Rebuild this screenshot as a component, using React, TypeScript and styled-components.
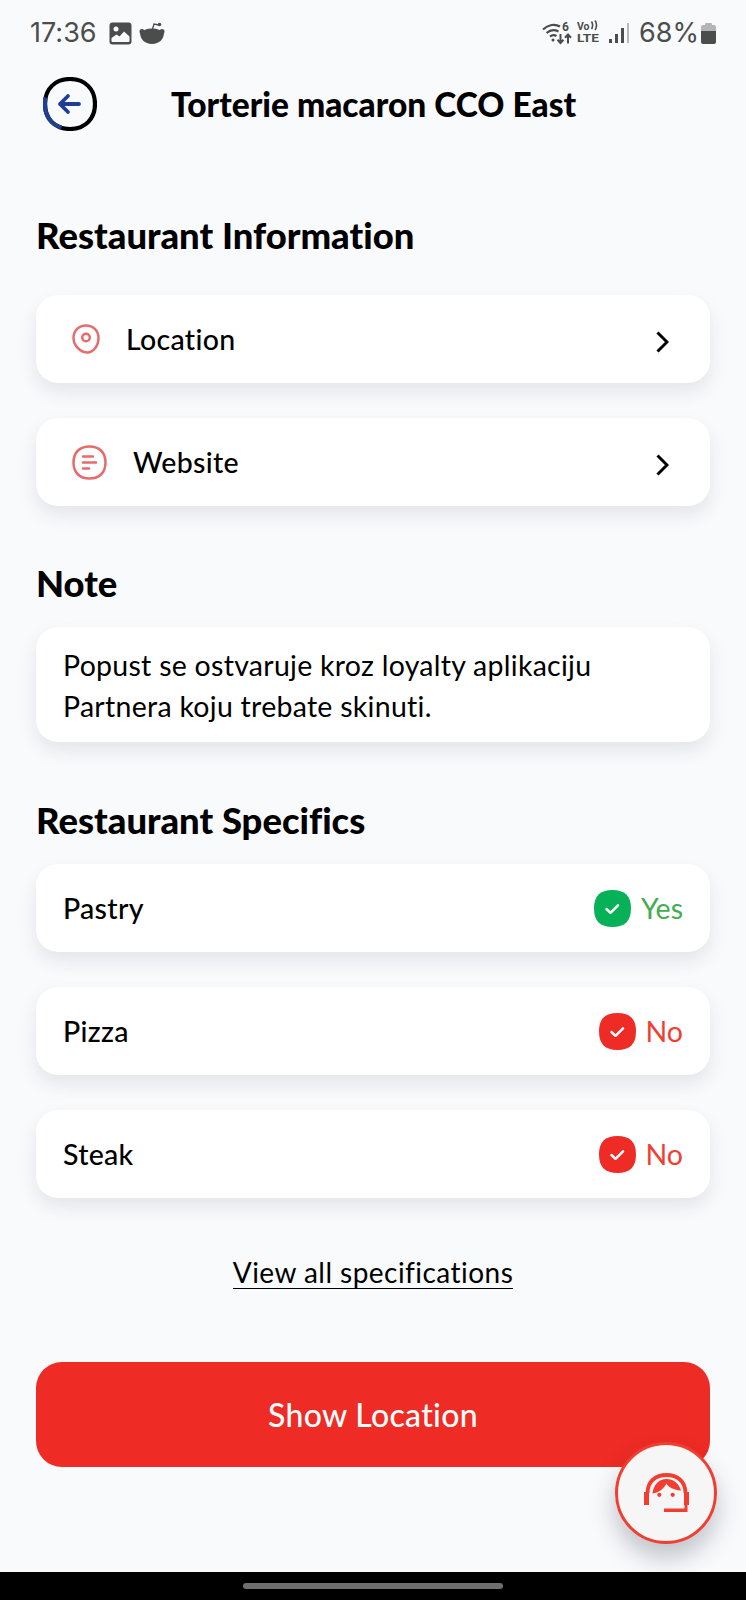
import React from 'react';
import styled, { createGlobalStyle } from 'styled-components';

const GlobalStyle = createGlobalStyle`
    html, body {
        margin: 0;
        padding: 0;
        background: #f9fafc;
    }
    * {
        box-sizing: border-box;
    }
`;

const Screen = styled.div`
    position: relative;
    width: 746px;
    height: 1600px;
    overflow: hidden;
    background: #f9fafc;
    font-family: Lato, "Liberation Sans", sans-serif;
    font-variant-ligatures: none;
    color: #000;
    display: flex;
    flex-direction: column;
`;

const StatusBar = styled.div`
    height: 66px;
    padding: 0 30px;
    display: flex;
    align-items: center;
    justify-content: space-between;
    color: #4b4d4d;
`;

const StatusGroup = styled.div<{ $gap: number }>`
    display: flex;
    align-items: center;
    gap: ${p => p.$gap}px;
`;

const StatusText = styled.span`
    font-family: Inter, Roboto, sans-serif;
    font-size: 27px;
    line-height: 32px;
    margin-right: 5px;
`;

const Battery = styled(StatusText)`
    margin: 0 -3px 0 4px;
`;

const Header = styled.header`
    height: 76px;
    padding-left: 43px;
    display: flex;
    align-items: center;
`;

const BackButton = styled.div`
    width: 54px;
    height: 54px;
`;

const Title = styled.h1`
    margin: 0 0 0 74px;
    font-size: 33.5px;
    line-height: 40px;
    font-weight: 900;
`;

const Content = styled.main`
    padding: 0 36px;
    display: flex;
    flex-direction: column;
`;

const SectionTitle = styled.h2<{ $top: number; $bottom: number }>`
    margin: ${p => p.$top}px 0 ${p => p.$bottom}px;
    font-size: 36.4px;
    line-height: 42px;
    font-weight: 900;
`;

const Card = styled.div`
    height: 88px;
    padding: 0 41px 0 36px;
    background: #fff;
    border-radius: 22px;
    box-shadow: 0 9px 18px rgba(40, 50, 70, 0.1);
    display: flex;
    align-items: center;
    justify-content: space-between;
`;

const CardStack = styled.div`
    display: flex;
    flex-direction: column;
    gap: 35px;
`;

const CardLabel = styled.div`
    display: flex;
    align-items: center;
    font-size: 28.5px;
    font-weight: 500;
    letter-spacing: 0.3px;
`;

const LinkText = styled.span<{ $gap: number }>`
    margin-left: ${p => p.$gap}px;
`;

const Chevron = styled.span`
    display: flex;
    margin-top: 6px;
`;

const SpecCard = styled(Card)`
    padding: 0 27px;
`;

const NoteCard = styled(Card)`
    height: 115px;
    padding: 18px 27px 0;
    font-size: 28.5px;
    line-height: 40.5px;
    letter-spacing: 0.27px;
    display: block;
`;

const Status = styled.div<{ $color: string }>`
    display: flex;
    align-items: center;
    gap: 10px;
    color: ${p => p.$color};
    font-size: 28.5px;
`;

const ViewAll = styled.a`
    align-self: center;
    margin-top: 58px;
    font-size: 28px;
    line-height: 32px;
    letter-spacing: 0.46px;
    color: #000;
    border-bottom: 1.5px solid #000;
`;

const PrimaryButton = styled.button`
    margin-top: 73px;
    height: 105px;
    border: none;
    border-radius: 26px;
    background: #ef2b25;
    color: #fff;
    font-family: inherit;
    font-variant-ligatures: none;
    font-size: 32px;
    font-weight: 500;
    letter-spacing: 0.3px;
`;

const SupportFab = styled.div`
    position: absolute;
    left: 615px;
    top: 1442px;
    width: 102px;
    height: 102px;
    border-radius: 50%;
    background: #f6f6f7;
    border: 3.5px solid #f23d31;
    box-shadow: 0 14px 24px rgba(40, 50, 70, 0.28);
    display: flex;
    align-items: center;
    justify-content: center;
`;

const NavBar = styled.div`
    position: absolute;
    left: 0;
    right: 0;
    bottom: 0;
    height: 28px;
    background: #000;
    display: flex;
    align-items: center;
    justify-content: center;
`;

const NavHandle = styled.div`
    width: 260px;
    height: 6px;
    border-radius: 3px;
    background: #6f6f6f;
`;

const SignalBars = styled.span`
    display: flex;
    margin-left: 3px;
`;

const GalleryIcon = () => (
    <svg width="23" height="23" viewBox="0 0 23 23">
        <rect width="22" height="22" x="0.5" y="0.5" rx="3" fill="#4b4d4d" />
        <circle cx="7" cy="7" r="2.5" fill="#f9fafc" />
        <path d="M2.5 19v-3l5-3.5 3 2 4.500-5 5.500 5V19a1 1 0 0 1-1 1H3.500a1 1 0 0 1-1-1z" fill="#f9fafc" />
    </svg>
);

const RedditIcon = () => (
    <svg width="26" height="23" viewBox="0 0 26 23">
        <path d="M1 10.500h24c0 6.500-4.500 11.500-12 11.500S1 17 1 10.500z" fill="#4b4d4d" />
        <ellipse cx="13" cy="10.500" rx="10" ry="4" fill="#4b4d4d" />
        <circle cx="3" cy="9.500" r="2.500" fill="#4b4d4d" />
        <circle cx="23" cy="9.500" r="2.500" fill="#4b4d4d" />
        <path d="M13.500 7l1.500-5 5 1" fill="none" stroke="#4b4d4d" strokeWidth="1.300" />
        <circle cx="20.500" cy="2.500" r="1.800" fill="#4b4d4d" />
    </svg>
);

const WifiIcon = () => (
    <svg width="30" height="24" viewBox="0 0 30 24" fill="none" stroke="#4b4d4d">
        <path d="M1 8.500c5-5 12-6 17-3" strokeWidth="2.200" />
        <path d="M4.500 12c3.500-3 8-3.500 12-1.500" strokeWidth="2.200" />
        <path d="M8 15.500c2-1.500 4.500-1.700 6.500-.5" strokeWidth="2.200" />
        <circle cx="11" cy="19" r="1.500" fill="#4b4d4d" stroke="none" />
        <path d="M18.500 13v9m-3-3.200l3 3.200 3-3.200M26 22.500v-9m-3 3.200l3-3.200 3 3.200" strokeWidth="2" />
        <text x="20" y="10" fontSize="12" fontWeight="700" fontFamily="Roboto" fill="#4b4d4d" stroke="none">6</text>
    </svg>
);

const VolteIcon = () => (
    <svg width="24" height="26" viewBox="0 -1 24 26" fill="#4b4d4d">
        <text x="0" y="8.500" fontSize="10" fontWeight="700" fontFamily="Roboto" textLength="12.500" lengthAdjust="spacingAndGlyphs">Vo</text>
        <path d="M14.500 .5c1.500 2 1.500 5.500 0 7.500M18 -.5c2 2.500 2 7 0 9.500" fill="none" stroke="#4b4d4d" strokeWidth="1.600" />
        <text x="0" y="21" fontSize="11" fontWeight="700" fontFamily="Roboto" textLength="22" lengthAdjust="spacingAndGlyphs">LTE</text>
    </svg>
);

const SignalIcon = () => (
    <svg width="21" height="22" viewBox="0 0 21 22">
        <rect x="0" y="17" width="3" height="4" fill="#4b4d4d" />
        <rect x="6" y="12" width="3" height="9" fill="#4b4d4d" />
        <rect x="12" y="6" width="3" height="15" fill="#4b4d4d" />
        <rect x="18" y="1" width="2" height="20" fill="#b9b9b9" />
    </svg>
);

const BatteryIcon = () => (
    <svg width="15" height="21" viewBox="0 0 15 21">
        <path d="M5 0h5a1 1 0 0 1 1 1v1h2a2 2 0 0 1 2 2v4H0V4a2 2 0 0 1 2-2h2V1a1 1 0 0 1 1-1z" fill="#b5b5b5" />
        <path d="M0 8h15v11a2 2 0 0 1-2 2H2a2 2 0 0 1-2-2z" fill="#4b4d4d" />
    </svg>
);

const BackIcon = () => (
    <svg width="54" height="54" viewBox="0 0 54 54" fill="none">
        <path
            d="M27 2C42 2 52 12 52 27S42 52 27 52 2 42 2 27 12 2 27 2z"
            stroke="#000"
            strokeWidth="4.200"
        />
        <path
            d="M18.500 50.500C8 47.500 2 39 2 27c0-2.500.2-4.500.6-6.500"
            stroke="#1f3f94"
            strokeWidth="4.200"
        />
        <path
            d="M36 27H17m8-8l-8 8 8 8"
            stroke="#1f3f94"
            strokeWidth="3.800"
            strokeLinecap="round"
            strokeLinejoin="round"
        />
    </svg>
);

const PinIcon = () => (
    <svg width="28" height="30" viewBox="0 0 28 30" fill="none" stroke="#e96a6b" strokeWidth="2.500">
        <path d="M14 1.500c7 0 12.500 5 12.500 12.500 0 8-5.500 14.500-11 14.500C9 28.500 1.500 22 1.500 14 1.500 6.500 7 1.500 14 1.500z" />
        <circle cx="14" cy="13.500" r="3.800" />
    </svg>
);

const NoteIcon = () => (
    <svg width="35" height="35" viewBox="0 0 35 35" fill="none" stroke="#e96a6b" strokeWidth="2.500" strokeLinecap="round">
        <path d="M17.500 1.500c10 0 16 6 16 16s-6 16-16 16-16-6-16-16 6-16 16-16z" />
        <path d="M11 11.500h10M11 17.500h13M11 23.500h6" />
    </svg>
);

const ChevronIcon = () => (
    <svg width="13" height="22" viewBox="0 0 13 22" fill="none">
        <path d="M1.500 1.500L11 11l-9.500 9.500" stroke="#000" strokeWidth="3" />
    </svg>
);

const BadgeIcon = ({ color }: { color: string }) => (
    <svg width="37" height="37" viewBox="0 0 37 37">
        <path d="M18.500 0C31 0 37 6 37 18.500S31 37 18.500 37 0 31 0 18.500 6 0 18.500 0z" fill={color} />
        <path d="M12.500 19l4 3.800 7.500-7.500" fill="none" stroke="#fff" strokeWidth="2.500" strokeLinecap="round" strokeLinejoin="round" />
    </svg>
);

const SupportIcon = () => (
    <svg width="45" height="40" viewBox="0 0 45 40" fill="#f23d31">
        <path d="M0 19h5v13H0zM40 19h5v13h-5z" />
        <path d="M3.500 20C3.500 8 12 2 22.500 2S41.500 8 41.500 20" fill="none" stroke="#f23d31" strokeWidth="3.800" />
        <path d="M8.500 20.500C9.500 11.500 15 6 22.500 6c7 0 12.500 4.500 14.500 11.500-7-.5-12.500-3-14.500-7-2.500 5-7 9-14 10z" />
        <circle cx="15.300" cy="21.800" r="2.100" />
        <circle cx="28.700" cy="21.800" r="2.100" />
        <path d="M20 39v-3.500h20.500V32h3v7z" />
    </svg>
);

const App = () => {
    return (
        <Screen>
            <GlobalStyle />
            <StatusBar>
                <StatusGroup $gap={7}>
                    <StatusText>17:36</StatusText>
                    <GalleryIcon />
                    <RedditIcon />
                </StatusGroup>
                <StatusGroup $gap={5}>
                    <WifiIcon />
                    <VolteIcon />
                    <SignalBars><SignalIcon /></SignalBars>
                    <Battery>68%</Battery>
                    <BatteryIcon />
                </StatusGroup>
            </StatusBar>
            <Header>
                <BackButton><BackIcon /></BackButton>
                <Title>Torterie macaron CCO East</Title>
            </Header>
            <Content>
                <SectionTitle $top={72} $bottom={39}>Restaurant Information</SectionTitle>
                <CardStack>
                    <Card>
                        <CardLabel><PinIcon /><LinkText $gap={26}>Location</LinkText></CardLabel>
                        <Chevron><ChevronIcon /></Chevron>
                    </Card>
                    <Card>
                        <CardLabel><NoteIcon /><LinkText $gap={26}>Website</LinkText></CardLabel>
                        <Chevron><ChevronIcon /></Chevron>
                    </Card>
                </CardStack>
                <SectionTitle $top={56} $bottom={23}>Note</SectionTitle>
                <NoteCard>
                    Popust se ostvaruje kroz loyalty aplikaciju<br />
                    Partnera koju trebate skinuti.
                </NoteCard>
                <SectionTitle $top={57} $bottom={23}>Restaurant Specifics</SectionTitle>
                <CardStack>
                    <SpecCard>
                        <CardLabel>Pastry</CardLabel>
                        <Status $color="#43ad4f"><BadgeIcon color="#07b157" />Yes</Status>
                    </SpecCard>
                    <SpecCard>
                        <CardLabel>Pizza</CardLabel>
                        <Status $color="#f23d31"><BadgeIcon color="#ef2b25" />No</Status>
                    </SpecCard>
                    <SpecCard>
                        <CardLabel>Steak</CardLabel>
                        <Status $color="#f23d31"><BadgeIcon color="#ef2b25" />No</Status>
                    </SpecCard>
                </CardStack>
                <ViewAll>View all specifications</ViewAll>
                <PrimaryButton>Show Location</PrimaryButton>
            </Content>
            <SupportFab><SupportIcon /></SupportFab>
            <NavBar><NavHandle /></NavBar>
        </Screen>
    );
};

export default App;
